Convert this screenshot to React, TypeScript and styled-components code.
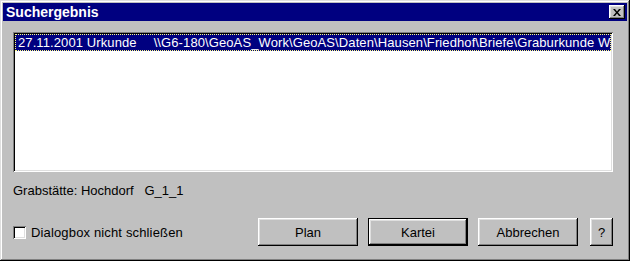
import React from "react";
import styled, { createGlobalStyle } from "styled-components";

const Global = createGlobalStyle`
  html, body { margin: 0; padding: 0; background: #c0c0c0; }
  * { box-sizing: border-box; }
  body { font-family: "Liberation Sans", Arial, sans-serif; font-size: 13px; color: #000; }
`;

const Window = styled.div`
  width: 630px;
  height: 261px;
  background: #c0c0c0;
  padding: 3px;
  display: flex;
  flex-direction: column;
  box-shadow: inset -1px -1px #000, inset 1px 1px #dfdfdf, inset -2px -2px #808080, inset 2px 2px #fff;
`;

const TitleBar = styled.div`
  height: 18px;
  background: #000080;
  display: flex;
  align-items: center;
  justify-content: space-between;
  padding: 0 2px 0 3px;
`;

const Title = styled.span`
  color: #fff;
  font-weight: bold;
  font-size: 14px;
`;

const CloseBtn = styled.button`
  width: 16px;
  height: 14px;
  padding: 0;
  border: none;
  background: #c0c0c0;
  box-shadow: inset -1px -1px #000, inset 1px 1px #fff, inset -2px -2px #808080, inset 2px 2px #dfdfdf;
  display: flex;
  align-items: center;
  justify-content: center;
`;

const Content = styled.div`
  flex: 1;
  display: flex;
  flex-direction: column;
  padding: 11px 14px 0 10px;
`;

const ListBox = styled.div`
  width: 600px;
  height: 140px;
  background: #fff;
  padding: 2px;
  box-shadow: inset 1px 1px #808080, inset -1px -1px #fff, inset 2px 2px #000, inset -2px -2px #dfdfdf;
  overflow: hidden;
`;

const Row = styled.div<{ $selected?: boolean }>`
  height: 17px;
  line-height: 15px;
  padding: 0 2px;
  white-space: pre;
  overflow: hidden;
  letter-spacing: 0.1px;
  color: ${(p) => (p.$selected ? "#fff" : "#000")};
  background: ${(p) => (p.$selected ? "#000080" : "transparent")};
  border: 1px dotted ${(p) => (p.$selected ? "#ffff80" : "transparent")};
`;

const Gap = styled.span`
  display: inline-block;
  width: 17px;
`;

const Info = styled.div`
  margin-top: 11px;
  height: 16px;
  line-height: 16px;
  white-space: pre;
`;

const BottomRow = styled.div`
  margin-top: 19px;
  display: flex;
  align-items: center;
`;

const CheckLabel = styled.label`
  display: flex;
  align-items: center;
  gap: 5px;
  flex: 1;
  letter-spacing: 0.15px;
`;

const CheckBox = styled.span`
  width: 13px;
  height: 13px;
  background: #fff;
  box-shadow: inset 1px 1px #808080, inset -1px -1px #fff, inset 2px 2px #000, inset -2px -2px #dfdfdf;
`;

const Button = styled.button<{ $default?: boolean; $w?: number }>`
  width: ${(p) => p.$w ?? 100}px;
  height: 28px;
  margin-left: ${(p) => (p.$w ? 12 : 10)}px;
  padding: 0;
  font-family: "Liberation Sans", Arial, sans-serif;
  font-size: 13px;
  color: #000;
  background: #c0c0c0;
  border: ${(p) => (p.$default ? "1px solid #000" : "none")};
  box-shadow: inset -1px -1px #000, inset 1px 1px #fff, inset -2px -2px #808080, inset 2px 2px #dfdfdf;
`;

export default function App() {
  return (
    <>
      <Global />
      <Window>
        <TitleBar>
          <Title>Suchergebnis</Title>
          <CloseBtn aria-label="Schließen">
            <svg width="8" height="7" viewBox="0 0 8 7">
              <path d="M0 0h2l2 2.5L6 0h2L5 3.5 8 7H6L4 4.5 2 7H0l3-3.5z" fill="#000" />
            </svg>
          </CloseBtn>
        </TitleBar>
        <Content>
          <ListBox>
            <Row $selected>
              27.11.2001 Urkunde<Gap />\\G6-180\GeoAS_Work\GeoAS\Daten\Hausen\Friedhof\Briefe\Graburkunde Wagner.doc
            </Row>
          </ListBox>
          <Info>Grabstätte: Hochdorf   G_1_1</Info>
          <BottomRow>
            <CheckLabel>
              <CheckBox />
              Dialogbox nicht schließen
            </CheckLabel>
            <Button>Plan</Button>
            <Button $default>Kartei</Button>
            <Button>Abbrechen</Button>
            <Button $w={23}>?</Button>
          </BottomRow>
        </Content>
      </Window>
    </>
  );
}
